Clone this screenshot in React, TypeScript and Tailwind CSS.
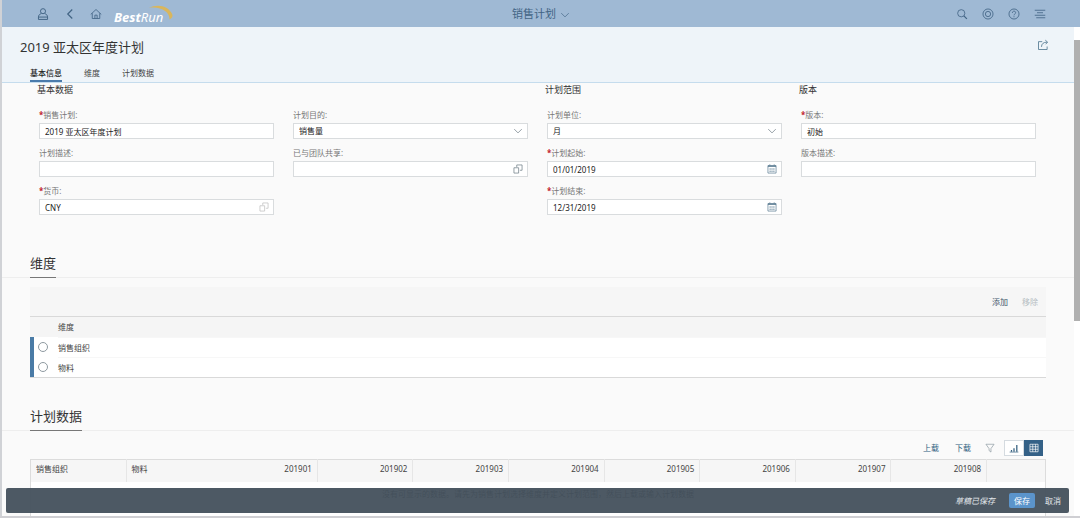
import { useState } from "react";
import type { ReactNode } from "react";

const tabs = [
  ["#basic", "基本信息"],
  ["#dimensions", "维度"],
  ["#plan-data", "计划数据"],
];

const dimensions = [
  ["org", "销售组织"],
  ["material", "物料"],
];

const months = ["201901", "201902", "201903", "201904", "201905", "201906", "201907", "201908"];

function Icon({ className = "size-3", children }: { className?: string; children: ReactNode }) {
  return (
    <svg
      viewBox="0 0 16 16"
      className={className}
      fill="none"
      stroke="currentColor"
      strokeWidth="1.1"
      aria-hidden="true"
    >
      {children}
    </svg>
  );
}

const ChevronDown = ({ className }: { className?: string }) => (
  <Icon className={className}>
    <path d="M2 5l6 6 6-6" />
  </Icon>
);

const ValueHelp = () => (
  <Icon className="size-2.5">
    <path d="M6 5V1.500h8.500V10H11M1.500 6H9v8.500H1.500z" />
  </Icon>
);

const Calendar = () => (
  <Icon className="size-2.5">
    <path d="M1.500 2.500h13v12h-13zM4.500 .5v2M11.500 .5v2" />
    <path d="M1.500 3.500h13" strokeWidth="2" />
    <path d="M4 8h2M7 8h2M10 8h2M4 11.500h2M7 11.500h2M10 11.500h2" strokeWidth="1.600" />
  </Icon>
);

function Logo() {
  return (
    <a href="#home" aria-label="BestRun" className="relative ml-3 flex h-[27px] w-[60px] items-center text-white">
      <svg viewBox="0 0 60 27" className="absolute inset-0 h-[27px] w-[60px]" aria-hidden="true">
        <path d="M35 8C43 3.500 55 5.500 58.500 15c.3 1.500-.8 3.500-3 4.500C56 11.500 46 6 35 8z" fill="#d9b65c" />
      </svg>
      <span className="relative mt-[7px] text-[13px] leading-4 italic">
        <b>Best</b>Run
      </span>
    </a>
  );
}

type FieldProps = {
  id: string;
  label: string;
  value?: string;
  required?: boolean;
  select?: boolean;
  icon?: ReactNode;
};

function Field({ id, label, value = "", required, select, icon }: FieldProps) {
  return (
    <div className="mb-2 pr-2.5 pl-[9px]">
      <label htmlFor={id} className="block h-3.5 text-[8px] leading-3 text-[#777]">
        {required && <span className="font-bold text-[#c0202a]">*</span>}
        {label}:
      </label>
      <div className="relative flex h-4 items-center border border-[#d9dcde] bg-white">
        {select ? (
          <select
            id={id}
            defaultValue={value}
            className="h-full w-full appearance-none bg-transparent px-[5px] text-[8px] leading-3 text-[#222] outline-none"
          >
            <option>{value}</option>
          </select>
        ) : (
          <input
            id={id}
            defaultValue={value}
            className="h-full w-full min-w-0 flex-1 bg-transparent px-[5px] text-[8px] leading-3 text-[#222] outline-none"
          />
        )}
        {select && (
          <span className="pointer-events-none absolute right-1 text-[#66757f]">
            <ChevronDown className="size-2.5" />
          </span>
        )}
        {icon}
      </div>
    </div>
  );
}

function IconButton({ label, className = "", children }: { label: string; className?: string; children: ReactNode }) {
  return (
    <button type="button" aria-label={label} className={`flex shrink-0 items-center justify-center ${className}`}>
      {children}
    </button>
  );
}

function ShellBar() {
  return (
    <header className="flex h-[27px] shrink-0 items-center bg-[#9fb9d4] px-[34px] text-[#426484]">
      <div className="flex flex-1 items-center">
        <IconButton label="用户">
          <Icon className="size-3.5">
            <circle cx="8" cy="4.800" r="2.900" />
            <path d="M6 7.500c-2 .8-3.200 2-3.200 3.800v2.900h10.400v-2.900c0-1.800-1.200-3-3.200-3.800M3 11.500h10" />
          </Icon>
        </IconButton>
        <IconButton label="返回" className="ml-3.5">
          <Icon className="size-3">
            <path d="M11 2L5 8l6 6" strokeWidth="1.600" />
          </Icon>
        </IconButton>
        <IconButton label="主页" className="ml-3.5">
          <Icon className="size-3">
            <path d="M1 8.500L8 2l7 6.500M3 7v7h10V7M6.500 14V9.500h3V14" />
          </Icon>
        </IconButton>
        <Logo />
      </div>
      <button type="button" className="flex items-center gap-1 text-[11px] leading-4">
        销售计划
        <ChevronDown className="mt-0.5 size-2.5" />
      </button>
      <div className="flex flex-1 items-center justify-end gap-3.5">
        <IconButton label="搜索">
          <Icon>
            <circle cx="7" cy="7" r="4.800" />
            <path d="M10.500 10.500l4 4" strokeWidth="1.600" />
          </Icon>
        </IconButton>
        <IconButton label="助手">
          <Icon>
            <circle cx="8" cy="8" r="6.700" />
            <circle cx="8" cy="8" r="3.500" />
          </Icon>
        </IconButton>
        <IconButton label="帮助">
          <Icon>
            <circle cx="8" cy="8" r="6.700" />
            <path d="M5.800 6.500c0-3 4.400-3 4.400-.3C10.200 8 8 7.900 8 9.800M8 11v1.300" />
          </Icon>
        </IconButton>
        <IconButton label="通知">
          <Icon>
            <path d="M1 3h14M4 6.300h8M1 9.700h14M3 13h12" />
          </Icon>
        </IconButton>
      </div>
    </header>
  );
}

function PageHeader() {
  return (
    <div className="flex h-14 shrink-0 flex-col justify-between border-b border-[#c5dced] bg-[#eef4f9] pl-[18px]">
      <div className="flex items-center justify-between pt-2.5 pr-[25px]">
        <h1 className="text-[13px] leading-5 text-[#333]">2019 亚太区年度计划</h1>
        <IconButton label="共享" className="-mt-1 text-[#50778f]">
          <Icon>
            <path d="M7 3.500H2v10.500h11.500V10M6 10.500c0-4 2.500-6.300 7.500-6.300M11 1.500l3.200 2.700L11.500 7" />
          </Icon>
        </IconButton>
      </div>
      <nav className="flex gap-[22px] pl-[10px] text-[8px] leading-3">
        {tabs.map(([href, label], i) => (
          <a
            key={href}
            href={href}
            className={
              i === 0 ? "border-b-2 border-[#4a7bac] pb-px font-medium text-[#222]" : "pb-[3px] text-[#444]"
            }
          >
            {label}
          </a>
        ))}
      </nav>
    </div>
  );
}

function GroupTitle({ children }: { children: ReactNode }) {
  return <h3 className="mb-3 h-3.5 pl-[7px] text-[9px] leading-3.5 text-[#333]">{children}</h3>;
}

function SectionTitle({ children }: { children: ReactNode }) {
  return (
    <div className="flex border-b border-[#eeeeee] pl-7">
      <h2 className="-mb-px border-b border-[#777] pb-1 text-[13px] leading-5 text-[#333]">{children}</h2>
    </div>
  );
}

function BasicInfo() {
  return (
    <section id="basic" className="grid h-[170px] shrink-0 grid-cols-4 px-7">
      <div>
        <GroupTitle>基本数据</GroupTitle>
        <Field id="plan" label="销售计划" value="2019 亚太区年度计划" required />
        <Field id="plan-desc" label="计划描述" />
        <Field
          id="currency"
          label="货币"
          value="CNY"
          required
          icon={<IconButton label="选择货币" className="mr-1 text-[#bbb]"><ValueHelp /></IconButton>}
        />
      </div>
      <div className="pt-[26px]">
        <Field id="purpose" label="计划目的" value="销售量" select />
        <Field
          id="team"
          label="已与团队共享"
          icon={<IconButton label="选择团队" className="mr-1 text-[#66757f]"><ValueHelp /></IconButton>}
        />
      </div>
      <div>
        <GroupTitle>计划范围</GroupTitle>
        <Field id="unit" label="计划单位" value="月" select />
        <Field
          id="start"
          label="计划起始"
          value="01/01/2019"
          required
          icon={<IconButton label="选择起始日期" className="mr-1 text-[#56788f]"><Calendar /></IconButton>}
        />
        <Field
          id="end"
          label="计划结束"
          value="12/31/2019"
          required
          icon={<IconButton label="选择结束日期" className="mr-1 text-[#56788f]"><Calendar /></IconButton>}
        />
      </div>
      <div>
        <GroupTitle>版本</GroupTitle>
        <Field id="version" label="版本" value="初始" required />
        <Field id="version-desc" label="版本描述" />
      </div>
    </section>
  );
}

function Dimensions() {
  const [selected, setSelected] = useState("");
  return (
    <section id="dimensions" className="shrink-0">
      <SectionTitle>维度</SectionTitle>
      <div className="mx-7 mt-[9px]">
        <div className="flex h-[29px] items-center justify-end gap-3.5 bg-[#f6f6f6] pr-2 text-[8px] leading-3">
          <button type="button" className="text-[#3f566b]">添加</button>
          <button type="button" disabled className="text-[#b5bdc2]">移除</button>
        </div>
        <div className="border-y border-[#d9d9d9]">
          <table className="w-full table-fixed border-separate border-spacing-0 text-left text-[8px] leading-3 text-[#444]">
            <thead>
              <tr className="h-5 bg-[#f5f5f5]">
                <th className="w-7"></th>
                <th className="font-normal">维度</th>
              </tr>
            </thead>
            <tbody>
              {dimensions.map(([id, name]) => (
                <tr key={id} className="h-5 bg-white">
                  <td className="border-l-4 border-[#4a7ba6] pl-1">
                    <input
                      id={id}
                      type="radio"
                      name="dimension"
                      checked={selected === id}
                      onChange={() => setSelected(id)}
                      className="block size-2.5 appearance-none rounded-full border border-[#8f9aa1] checked:border-4"
                    />
                  </td>
                  <td className="border-t border-[#f7f7f7]">
                    <label htmlFor={id}>{name}</label>
                  </td>
                </tr>
              ))}
            </tbody>
          </table>
        </div>
      </div>
    </section>
  );
}

function PlanData() {
  return (
    <section id="plan-data" className="mt-7 shrink-0">
      <SectionTitle>计划数据</SectionTitle>
      <div className="mx-7">
        <div className="flex h-7 items-center justify-end pt-[9px] pr-[3px] pb-[3px] text-[8px] leading-3 text-[#2f5f80]">
          <button type="button">上载</button>
          <button type="button" className="ml-4">下载</button>
          <IconButton label="筛选" className="ml-3.5 text-[#8a979f]">
            <Icon className="size-2.5">
              <path d="M1.500 2h13L9.500 9v5.500L6.500 12V9z" />
            </Icon>
          </IconButton>
          <IconButton label="图表" className="ml-[9px] h-4 w-5 border border-[#d5dbe0] bg-white text-[#34607f]">
            <Icon className="size-2.5">
              <path d="M1 14.500h14" />
              <path d="M4 14v-3M8 14V8.500M12.500 14V3" strokeWidth="2" />
            </Icon>
          </IconButton>
          <IconButton label="表格" className="h-4 w-[19px] bg-[#346187] text-white">
            <Icon className="size-2.5">
              <path d="M1.500 2h13v12h-13zM1.500 6h13M1.500 10h13M6 2v12M10.500 2v12" />
            </Icon>
          </IconButton>
        </div>
        <table className="w-full table-fixed border border-b-0 border-[#dcdcdc] bg-white text-[8px] leading-3 text-[#444]">
          <thead>
            <tr className="h-[22px] bg-[#f6f6f6]">
              <th className="w-[9.42%] border-r border-[#e6e6e6] px-[5px] pb-[3px] text-left font-normal">销售组织</th>
              <th className="w-[9.42%] px-[5px] pb-[3px] text-left font-normal">物料</th>
              {months.map((m) => (
                <th key={m} className="w-[9.42%] border-r border-[#e6e6e6] px-[5px] pb-[3px] text-right font-normal">
                  {m}
                </th>
              ))}
              <th></th>
            </tr>
          </thead>
          <tbody>
            <tr className="h-[44px]">
              <td colSpan={11} className="pb-5 text-center">
                没有可显示的数据。请先为销售计划选择维度并定义计划范围，然后上载或输入计划数据
              </td>
            </tr>
          </tbody>
        </table>
      </div>
    </section>
  );
}

function FooterBar() {
  return (
    <footer className="absolute right-[5px] bottom-[3px] left-1 flex h-[25px] items-center justify-end rounded-xs bg-[#43505c]/95 pr-2 text-[8px] leading-3 text-[#e3e8ec]">
      <span className="mr-3.5 italic">草稿已保存</span>
      <button type="button" className="mr-2.5 h-[15px] rounded-xs bg-[#5b94cb] px-[5px] text-white">
        保存
      </button>
      <button type="button">取消</button>
    </footer>
  );
}

export default function App() {
  return (
    <div className="flex h-screen flex-col overflow-hidden border-b-2 border-[#cfcfd3] bg-[#fafafa] font-['Noto_Sans','Noto_Sans_CJK_SC',sans-serif]">
      <div className="flex min-h-0 flex-1 flex-col border-l-2 border-[#d0d2d6]">
        <ShellBar />
        <div className="flex min-h-0 flex-1">
          <main className="relative flex min-w-0 flex-1 flex-col overflow-hidden">
            <PageHeader />
            <BasicInfo />
            <Dimensions />
            <PlanData />
            <FooterBar />
          </main>
          <div className="w-1.5 shrink-0 bg-white pt-[13px]">
            <div className="h-[59%] bg-[#b0b0b0]"></div>
          </div>
        </div>
      </div>
    </div>
  );
}
